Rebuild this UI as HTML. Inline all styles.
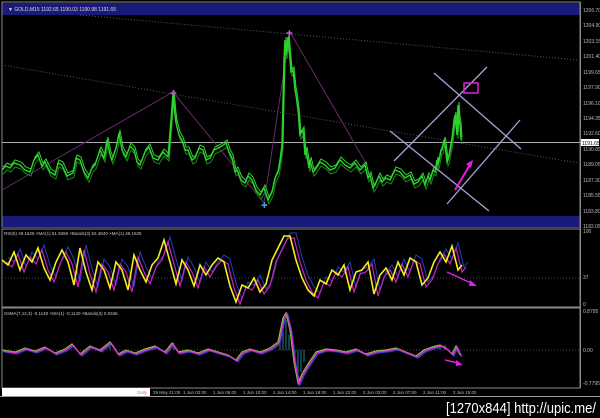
<!DOCTYPE html>
<html><head><meta charset="utf-8"><style>
html,body{margin:0;padding:0;background:#000;width:600px;height:418px;overflow:hidden}
svg{display:block}
text{font-family:"Liberation Sans",sans-serif}
</style></head><body>
<svg width="600" height="418" viewBox="0 0 600 418">
<defs>
<polyline id="pr" points="2,170 6,166 10,168 14,163 20,165 25,170 30,172 34,160 38,155 42,166 45,162 50,172 55,175 58,163 62,165 67,176 73,173 76,158 80,160 84,172 88,178 92,168 95,165 100,150 104,158 107,140 110,155 112,160 116,148 119,133 122,150 126,157 130,146 134,150 137,162 140,165 145,152 149,147 153,158 158,160 163,152 168,157 171,120 173,93 175,115 176,123 179,135 182,140 185,150 188,150 192,160 195,158 199,148 203,150 206,160 210,158 214,150 218,148 222,146 226,143 229,152 232,158 235,172 237,170 241,180 245,183 248,176 252,180 256,190 260,195 264,188 268,200 272,192 275,178 278,172 280,160 282,145 283,100 284,60 285,40 286,55 288,37 290,60 291,72 293,70 295,90 296,95 298,110 300,135 303,130 305,155 306,150 309,168 310,160 313,172 315,170 320,162 325,165 330,170 335,168 340,160 345,165 350,168 355,163 360,170 365,165 368,178 370,175 373,188 375,185 379,176 382,182 386,178 390,180 395,170 400,172 405,178 410,175 414,184 418,182 422,176 425,185 428,176 430,180 433,170 435,172 437,160 438,165 441,150 442,150 444,140 445,145 447,162 448,160 450,150 452,138 453,130 454,120 455,115 457,135 458,105 459,120 460,125 461,140"/>
<polyline id="rsi" points="2,260 8,265 14,252 20,270 26,255 32,262 38,248 44,268 50,280 56,262 62,250 68,262 74,285 80,248 86,272 92,290 98,262 104,270 110,288 116,262 122,270 128,290 134,255 140,270 146,282 152,265 158,258 164,240 170,262 176,284 182,260 188,270 194,286 200,265 206,275 212,265 218,258 224,262 230,286 236,302 242,285 248,288 254,278 260,292 266,284 272,260 278,248 284,236 290,236 296,260 302,278 308,290 314,296 320,280 326,284 332,270 338,275 344,265 350,290 356,272 362,270 368,262 374,294 380,275 386,268 392,280 398,262 404,275 410,258 416,262 422,285 428,278 434,262 440,252 446,262 452,246 458,270 462,265"/>
<polyline id="os" points="2,350 15,352 25,348 35,351 45,347 55,353 65,349 72,344 80,354 90,346 100,350 110,342 118,354 126,350 135,353 145,349 155,346 165,352 172,343 178,352 188,350 198,353 208,349 218,352 228,355 236,360 242,352 250,349 260,352 270,348 278,342 283,318 286,313 290,330 294,362 298,383 302,374 308,364 316,352 326,349 336,350 346,352 356,349 366,354 376,351 386,350 396,348 406,352 416,356 424,350 432,347 440,345 446,348 452,354 456,346 460,355"/>
</defs>
<rect width="600" height="418" fill="#000"/>
<rect x="2" y="2" width="578" height="225" fill="#000" stroke="#888" stroke-width="1"/>
<rect x="2.5" y="3" width="577" height="12" fill="#1a1a7a"/>
<rect x="2.5" y="216" width="577" height="11" fill="#1a1a7a"/>
<text x="8" y="11" font-size="5" fill="#ddd">▼ GOLD,M15  1192.65 1190.03 1190.98 1191.65</text>
<line x1="2" y1="65" x2="578" y2="163" stroke="#556" stroke-width="1" stroke-dasharray="1,2"/>
<line x1="80" y1="15" x2="578" y2="60" stroke="#556" stroke-width="1" stroke-dasharray="1,2"/>
<line x1="2" y1="142.5" x2="580" y2="142.5" stroke="#aaa" stroke-width="1"/>
<polyline points="2,190 173,92 264,203 290,32 367,165" fill="none" stroke="#6a2a6a" stroke-width="1"/>
<use href="#pr" fill="none" stroke="#1a8a1a" stroke-width="1" transform="translate(1,4)"/>
<use href="#pr" fill="none" stroke="#2fd32f" stroke-width="1.4"/>
<use href="#pr" fill="none" stroke="#2fd32f" stroke-width="1" transform="translate(1,-3)"/>
<text x="170" y="96" font-size="8" fill="#e040e0">✚</text>
<text x="286" y="36" font-size="8" fill="#e040e0">✚</text>
<text x="261" y="208" font-size="8" fill="#3aa0e0">✚</text>
<g stroke="#a9a2d8" stroke-width="1.3">
<line x1="434" y1="73" x2="521" y2="149"/>
<line x1="487" y1="67" x2="394" y2="161"/>
<line x1="520" y1="120" x2="447" y2="204"/>
<line x1="390" y1="131" x2="489" y2="211"/>
</g>
<rect x="464" y="83" width="14" height="10" fill="none" stroke="#e020e0" stroke-width="1.5"/>
<line x1="455" y1="190" x2="471" y2="163" stroke="#e020e0" stroke-width="2"/>
<polygon points="473,160 466,164 471,168" fill="#e020e0"/>
<line x1="580.5" y1="2" x2="580.5" y2="388" stroke="#888"/>
<g font-size="5" fill="#bbb">
<text x="583" y="12">1206.70</text><text x="583" y="27">1204.90</text><text x="583" y="43">1203.15</text>
<text x="583" y="58">1201.40</text><text x="583" y="74">1199.65</text><text x="583" y="89">1197.90</text>
<text x="583" y="105">1196.10</text><text x="583" y="120">1194.35</text><text x="583" y="135">1192.60</text>
<text x="583" y="151">1190.85</text><text x="583" y="166">1189.05</text><text x="583" y="182">1187.30</text>
<text x="583" y="197">1185.55</text><text x="583" y="213">1183.80</text><text x="583" y="228">1182.05</text>
<text x="583" y="233">100</text><text x="583" y="279">37</text><text x="583" y="306">0</text>
<text x="583" y="313">0.8795</text><text x="583" y="352">0.00</text><text x="583" y="385">-0.7795</text>
</g>
<rect x="581" y="139" width="18" height="7" fill="#fff"/>
<text x="582" y="145" font-size="5" fill="#000">1191.65</text>
<rect x="2" y="229" width="578" height="78" fill="#000" stroke="#888"/>
<line x1="2" y1="278" x2="580" y2="278" stroke="#445" stroke-dasharray="1,2"/>
<text x="4" y="235" font-size="4.5" fill="#ccc">RSI(5) 49.1625   ×MA(1) 61.9266   ×Bands(3) 62.4840   ×MA(1) 49.1625</text>
<use href="#rsi" fill="none" stroke="#2040c0" stroke-width="1" transform="translate(6,-3)"/>
<use href="#rsi" fill="none" stroke="#d020c0" stroke-width="1.2" transform="translate(4,2)"/>
<use href="#rsi" fill="none" stroke="#f0f020" stroke-width="1.6"/>
<line x1="447" y1="272" x2="473" y2="284" stroke="#e020e0" stroke-width="1.5"/>
<polygon points="477,286 470,280 469,286" fill="#e020e0"/>
<rect x="2" y="308" width="578" height="80" fill="#000" stroke="#888"/>
<line x1="2" y1="350" x2="580" y2="350" stroke="#445" stroke-dasharray="1,2"/>
<text x="4" y="315" font-size="4.5" fill="#ccc">OsMA(7,12,3) -0.1140   ×MA(1) -0.1140   ×Bands(3) 0.0346</text>
<g stroke="#2a7a8a" stroke-width="1">
<line x1="280" y1="350" x2="280" y2="330"/><line x1="283" y1="350" x2="283" y2="318"/><line x1="286" y1="350" x2="286" y2="320"/><line x1="289" y1="350" x2="289" y2="335"/>
<line x1="295" y1="350" x2="295" y2="368"/><line x1="298" y1="350" x2="298" y2="380"/><line x1="301" y1="350" x2="301" y2="372"/><line x1="304" y1="350" x2="304" y2="362"/>
<line x1="110" y1="350" x2="110" y2="344"/><line x1="174" y1="350" x2="174" y2="343"/><line x1="440" y1="350" x2="440" y2="346"/><line x1="445" y1="350" x2="445" y2="345"/>
</g>
<use href="#os" fill="none" stroke="#2040c0" stroke-width="1.2" transform="translate(2,2)"/>
<use href="#os" fill="none" stroke="#90c040" stroke-width="1.2"/>
<use href="#os" fill="none" stroke="#e030d0" stroke-width="1.3" transform="translate(1,1)"/>
<line x1="445" y1="360" x2="458" y2="363" stroke="#e020e0" stroke-width="1.5"/>
<polygon points="463,365 456,360 456,366" fill="#e020e0"/>
<rect x="2" y="388" width="148" height="8" fill="#fff"/>
<text x="137" y="394" font-size="4.5" fill="#e66">Daily</text>
<g font-size="4.5" fill="#bbb">
<text x="153" y="394">29 May 21:00</text><text x="183" y="394">1 Jun 02:00</text><text x="213" y="394">1 Jun 06:00</text>
<text x="243" y="394">1 Jun 10:00</text><text x="273" y="394">1 Jun 14:00</text><text x="303" y="394">1 Jun 18:00</text>
<text x="333" y="394">1 Jun 22:00</text><text x="363" y="394">2 Jun 03:00</text><text x="393" y="394">2 Jun 07:00</text>
<text x="423" y="394">2 Jun 11:00</text><text x="453" y="394">2 Jun 15:00</text>
</g>
<line x1="0" y1="396.5" x2="600" y2="396.5" stroke="#999"/>
<text x="446" y="413" font-size="14.5" fill="#fff" textLength="150" lengthAdjust="spacingAndGlyphs">[1270x844] http://upic.me/</text>
</svg>
</body></html>
